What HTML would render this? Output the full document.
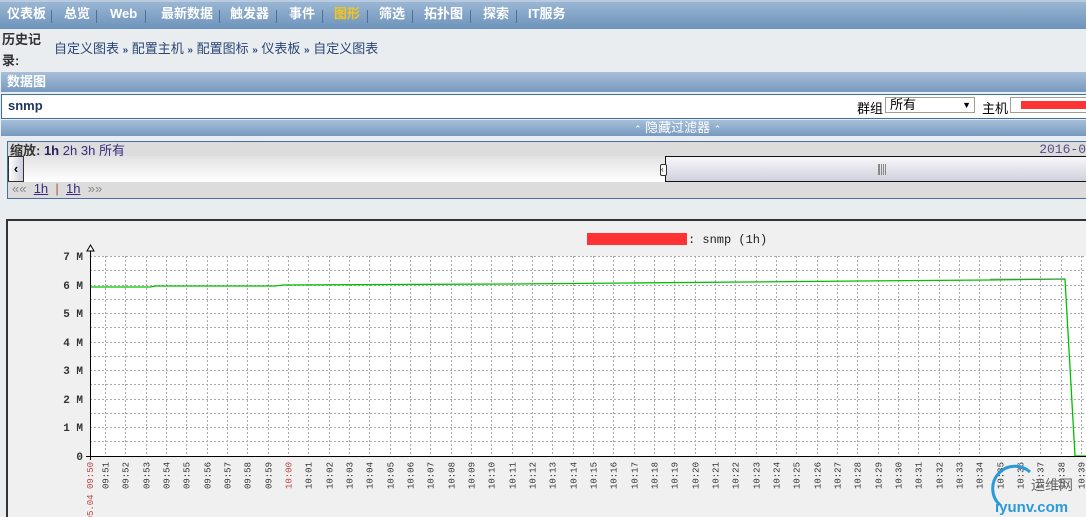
<!DOCTYPE html>
<html><head><meta charset="utf-8"><style>
*{margin:0;padding:0;box-sizing:border-box}
html,body{width:1086px;height:517px;overflow:hidden}
body{background:#e9edf0;font-family:"Liberation Sans","Noto Sans CJK SC",sans-serif;font-size:12px;position:relative}
.nav{position:absolute;left:0;top:0;width:1086px;height:29px;background:linear-gradient(#9ab6d2,#6d93bb);border-top:2px solid #b8cbe0}
.nav span{color:#fff;font-weight:bold;font-size:13px;position:absolute;top:3px;line-height:18px}
.nav i{position:absolute;top:8px;width:1px;height:13px;background:#506e96}
.bc{position:absolute;top:29px;left:2px;color:#333;font-weight:bold;line-height:21px;font-size:13px}
.bc2{position:absolute;top:40px;left:54px;color:#2a4575;font-size:13px;line-height:18px}
.hdr{position:absolute;left:1px;top:72px;width:1085px;height:20px;background:linear-gradient(#a7bfd8,#7699c0);color:#fff;font-weight:bold;padding:0 6px;font-size:13px;line-height:19px}
.row{position:absolute;left:1px;top:94px;width:1085px;height:25px;background:#fff;border:1px solid #3d6fa5;border-right:none}
.flt{position:absolute;left:1px;top:120px;width:1085px;height:16px;background:linear-gradient(#a7bfd8,#7699c0);color:#fff;font-size:13px;line-height:16px}
.sb{position:absolute;left:7px;top:141px;width:1079px;height:58px;border:1px solid #4a6fa5;border-right:none;background:#dcdcdc;font-size:13px}
a{color:#3a2c7a;text-decoration:underline}
.gr{position:absolute;left:6px;top:219px;width:1080px;height:298px;background:#f0f0f0;border-left:2px solid #333;border-top:2px solid #333}
</style></head><body>
<div class="nav">
<span style="left:7px">仪表板</span><i style="left:51px"></i>
<span style="left:64px">总览</span><i style="left:96px"></i>
<span style="left:110px">Web</span><i style="left:145px"></i>
<span style="left:161px">最新数据</span><i style="left:219px"></i>
<span style="left:230px">触发器</span><i style="left:276px"></i>
<span style="left:289px">事件</span><i style="left:322px"></i>
<span style="left:334px;color:#f5c518">图形</span><i style="left:367px"></i>
<span style="left:379px">筛选</span><i style="left:412px"></i>
<span style="left:424px">拓扑图</span><i style="left:470px"></i>
<span style="left:483px">探索</span><i style="left:516px"></i>
<span style="left:528px">IT服务</span>
</div>
<div class="bc">历史记<br>录:</div>
<div class="bc2">自定义图表 <b style="font-size:10px">»</b> 配置主机 <b style="font-size:10px">»</b> 配置图标 <b style="font-size:10px">»</b> 仪表板 <b style="font-size:10px">»</b> 自定义图表</div>
<div class="hdr">数据图</div>
<div class="row"><b style="position:absolute;left:6px;top:3px;color:#1f3560;font-size:13px">snmp</b>
<span style="position:absolute;left:855px;top:3px;font-size:13px">群组</span>
<div style="position:absolute;left:883px;top:2px;width:90px;height:16px;border:1px solid #a0a090;font-size:13px;padding-left:4px;line-height:14px">所有<span style="position:absolute;right:3px;top:0;font-size:9px">▼</span></div>
<span style="position:absolute;left:980px;top:3px;font-size:13px">主机</span>
<div style="position:absolute;left:1008px;top:2px;width:80px;height:16px;border:1px solid #a0a090"><div style="position:absolute;left:10px;top:3px;width:66px;height:8px;background:#f33"></div></div>
</div>
<div class="flt"><span style="position:absolute;left:633px;top:0"><span style="font-size:9px">⌃</span> 隐藏过滤器 <span style="font-size:9px">⌃</span></span></div>
<div class="sb">
<div style="position:absolute;left:2px;top:-2px;font-weight:bold;color:#333">缩放: <span style="color:#2a2060">1h</span> <a style="font-weight:normal">2h</a> <a style="font-weight:normal">3h</a> <a style="font-weight:normal">所有</a></div>
<div style="position:absolute;right:0;top:0;color:#5a4a8a;font-family:'Liberation Mono',monospace;font-size:13px">2016-0</div>
<div style="position:absolute;left:0;top:14px;width:1079px;height:26px;background:linear-gradient(#e2e2e4,#fff)"></div>
<div style="position:absolute;left:0;top:14px;width:16px;height:26px;border:1px solid #333;background:linear-gradient(90deg,#fff,#ccd);font-weight:bold;text-align:center;line-height:24px">‹</div>
<div style="position:absolute;left:657px;top:14px;width:422px;height:26px;border:1px solid #111;border-right:none;background:linear-gradient(#f7f7fa,#d0d0dc)"><div style="position:absolute;left:212px;top:7px;width:8px;height:11px;border-left:1px solid #888;border-right:1px solid #888;background:repeating-linear-gradient(90deg,#888 0 1px,transparent 1px 2px)"></div></div>
<div style="position:absolute;left:652px;top:22px;width:7px;height:12px;border:1px solid #333;background:#fff;border-radius:2px;font-size:8px;line-height:10px">‹</div>
<div style="position:absolute;left:4px;top:39px;color:#888">«« &nbsp;<a>1h</a> &nbsp;<span style="color:#a55">|</span>&nbsp; <a>1h</a> &nbsp;»»</div>
</div>
<div class="gr"></div>
<svg style="position:absolute;left:0;top:0" width="1086" height="517" font-family="Liberation Mono,monospace" font-size="9">
<rect x="90" y="256" width="996" height="200" fill="#fff"/>
<g stroke="#aaa" stroke-dasharray="2,2" stroke-width="1">
<line x1="90" y1="256.5" x2="1086" y2="256.5"/><line x1="90" y1="270.5" x2="1086" y2="270.5"/><line x1="90" y1="285.5" x2="1086" y2="285.5"/><line x1="90" y1="299.5" x2="1086" y2="299.5"/><line x1="90" y1="313.5" x2="1086" y2="313.5"/><line x1="90" y1="327.5" x2="1086" y2="327.5"/><line x1="90" y1="342.5" x2="1086" y2="342.5"/><line x1="90" y1="356.5" x2="1086" y2="356.5"/><line x1="90" y1="370.5" x2="1086" y2="370.5"/><line x1="90" y1="384.5" x2="1086" y2="384.5"/><line x1="90" y1="399.5" x2="1086" y2="399.5"/><line x1="90" y1="413.5" x2="1086" y2="413.5"/><line x1="90" y1="427.5" x2="1086" y2="427.5"/><line x1="90" y1="441.5" x2="1086" y2="441.5"/>
</g>
<g id="v" stroke="#aaa" stroke-dasharray="2,2"></g>
<polyline fill="none" stroke="#00c000" stroke-width="1.3" points="90,287 150,287 156,286 275,286 283,285 510,284 630,283 745,282 860,281 990,280 1065,279 1075,456 1086,456"/>
<line x1="990" y1="279" x2="1065" y2="279" stroke="#666" stroke-width="0.6"/>
<line x1="90.5" y1="250" x2="90.5" y2="460" stroke="#000"/>
<line x1="86" y1="456.5" x2="1086" y2="456.5" stroke="#000"/>
<path d="M87,251 L90.5,245 L94,251 Z" fill="#fff" stroke="#000"/>
<g fill="#333" text-anchor="end" font-size="11" font-weight="bold">
<text x="83" y="260">7 M</text><text x="83" y="289">6 M</text><text x="83" y="317">5 M</text><text x="83" y="346">4 M</text><text x="83" y="374">3 M</text><text x="83" y="403">2 M</text><text x="83" y="431">1 M</text><text x="83" y="460">0</text>
</g>
<g id="xl" text-anchor="end" fill="#333"></g>
<rect x="587" y="233" width="100" height="12" fill="#f33"/>
<text x="688" y="243" font-size="12" fill="#222">: snmp (1h)</text>
<text x="1031" y="490" font-size="14" font-family="Liberation Sans,Noto Sans CJK SC,sans-serif" fill="#666">运维网</text>
<text x="995" y="512" font-size="15" font-weight="bold" font-family="Liberation Sans,sans-serif" fill="#2a9ad8">iyunv.com</text>
<path d="M1000,505 A22,22 0 0 1 1030,472" fill="none" stroke="#2a9ad8" stroke-width="3"/>
</svg>
<script>
var v=document.getElementById('v'),xl=document.getElementById('xl'),s='';
var t='';
function lab(x,txt,col){t+='<text transform="translate('+(x+3)+',462) rotate(-90)" fill="'+col+'">'+txt+'</text>';}
lab(90,'2016.05.04 09:50','#b44');
for(var i=1;i<=49;i++){var x=Math.round(105+20.33*(i-1))+0.5;s+='<line x1="'+x+'" y1="256" x2="'+x+'" y2="456"/>';
var m=50+i,h=9+Math.floor(m/60);m=m%60;var txt=(h<10?'0':'')+h+':'+(m<10?'0':'')+m;lab(x,txt,txt=='10:00'?'#b44':'#333');}
v.innerHTML=s;xl.innerHTML=t;
</script>
</body></html>
